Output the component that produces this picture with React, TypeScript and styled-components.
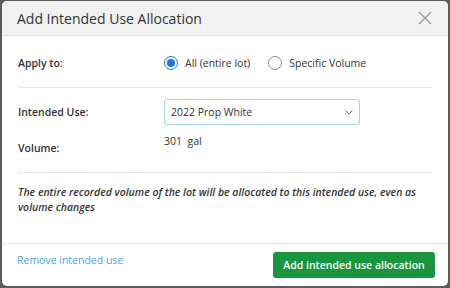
import React, { useState } from "react";
import styled, { createGlobalStyle } from "styled-components";

const GlobalStyle = createGlobalStyle`
  html, body {
    margin: 0;
    padding: 0;
    background: #5a5a5a;
    font-family: "Open Sans", "Liberation Sans", sans-serif;
  }
  * { box-sizing: border-box; }
`;

const Page = styled.div`
  width: 450px;
  height: 288px;
  padding: 1px 2px 2px 2px;
`;

const Modal = styled.div`
  width: 446px;
  height: 285px;
  background: #fff;
  border-radius: 5px;
  overflow: hidden;
  display: flex;
  flex-direction: column;
`;

const Header = styled.header`
  height: 35px;
  flex-shrink: 0;
  background: #f1f1f1;
  border-bottom: 1px solid #e2e2e2;
  display: flex;
  align-items: center;
  justify-content: space-between;
  padding: 0 16px 0 15px;
  h2 {
    margin: 0;
    font-size: 14px;
    font-weight: 500;
    color: #333;
  }
`;

const Close = styled.button`
  border: 0;
  background: none;
  padding: 0;
  width: 14px;
  height: 14px;
  display: flex;
  cursor: pointer;
`;

const Body = styled.div`
  flex: 1;
  padding: 0 16px;
  display: flex;
  flex-direction: column;
`;

const Section = styled.section<{ $pad: string }>`
  padding: ${(p) => p.$pad};
  border-bottom: 1px solid #e6e6e6;
  display: flex;
  flex-direction: column;
`;

const Row = styled.div<{ $h: number; $gap?: number }>`
  display: grid;
  grid-template-columns: 146px 1fr;
  align-items: center;
  min-height: ${(p) => p.$h}px;
  margin-top: ${(p) => p.$gap || 0}px;
`;

const Label = styled.span<{ $top?: number }>`
  font-size: 10.5px;
  font-weight: 600;
  color: #333;
  padding-top: ${(p) => p.$top || 0}px;
  align-self: ${(p) => (p.$top ? "start" : "center")};
`;

const RadioGroup = styled.div`
  display: flex;
  align-items: center;
  gap: 18px;
`;

const RadioOption = styled.label`
  display: flex;
  align-items: center;
  gap: 7px;
  font-size: 10.5px;
  color: #333;
  cursor: pointer;
`;

const RadioDot = styled.span<{ $on: boolean }>`
  width: 14px;
  height: 14px;
  border-radius: 50%;
  border: 1px solid ${(p) => (p.$on ? "#1a73e8" : "#8a8a8a")};
  background: #fff;
  display: flex;
  align-items: center;
  justify-content: center;
  &::after {
    content: "";
    width: 8px;
    height: 8px;
    border-radius: 50%;
    background: ${(p) => (p.$on ? "#1a73e8" : "transparent")};
  }
`;

const Select = styled.div`
  width: 196px;
  height: 26px;
  border: 1px solid #9fcff5;
  border-radius: 3px;
  display: flex;
  align-items: center;
  justify-content: space-between;
  padding: 0 6px;
  font-size: 10.5px;
  color: #333;
`;

const Value = styled.span`
  font-size: 10.5px;
  color: #333;
  align-self: start;
`;

const Note = styled.p`
  margin: 0;
  padding: 12px 0 0 0;
  font-size: 10.5px;
  font-style: italic;
  font-weight: 600;
  line-height: 15px;
  color: #333;
`;

const Footer = styled.footer`
  height: 43px;
  flex-shrink: 0;
  border-top: 1px solid #e6e6e6;
  display: flex;
  align-items: center;
  justify-content: space-between;
  padding: 0 13px 0 15px;
`;

const Link = styled.a`
  font-size: 10.5px;
  color: #4aa3e6;
  text-decoration: none;
  margin-top: -10px;
`;

const Primary = styled.button`
  height: 26px;
  width: 162px;
  background: #17953f;
  color: #fff;
  border: 0;
  border-radius: 3px;
  font-family: inherit;
  font-size: 10.5px;
  font-weight: 600;
  white-space: nowrap;
`;

export default function App() {
  const [all, setAll] = useState(true);
  return (
    <Page>
      <GlobalStyle />
      <Modal>
        <Header>
          <h2>Add Intended Use Allocation</h2>
          <Close aria-label="Close">
            <svg width="14" height="14" viewBox="0 0 14 14">
              <path d="M1 1L13 13M13 1L1 13" stroke="#9a9a9a" strokeWidth="1.4" />
            </svg>
          </Close>
        </Header>
        <Body>
          <Section $pad="14px 0 11px 0">
            <Row $h={26}>
              <Label>Apply to:</Label>
              <RadioGroup>
                <RadioOption onClick={() => setAll(true)}>
                  <RadioDot $on={all} />
                  All (entire lot)
                </RadioOption>
                <RadioOption onClick={() => setAll(false)}>
                  <RadioDot $on={!all} />
                  Specific Volume
                </RadioOption>
              </RadioGroup>
            </Row>
          </Section>
          <Section $pad="11px 0 12px 0">
            <Row $h={26}>
              <Label>Intended Use:</Label>
              <Select>
                2022 Prop White
                <svg width="8" height="5" viewBox="0 0 8 5">
                  <path d="M0.5 0.5L4 4L7.5 0.5" stroke="#777" fill="none" strokeWidth="1" />
                </svg>
              </Select>
            </Row>
            <Row $h={26} $gap={9}>
              <Label $top={7}>Volume:</Label>
              <Value>301&nbsp; gal</Value>
            </Row>
          </Section>
          <Note>
            The entire recorded volume of the lot will be allocated to this intended use, even as volume changes
          </Note>
        </Body>
        <Footer>
          <Link href="#">Remove intended use</Link>
          <Primary>Add intended use allocation</Primary>
        </Footer>
      </Modal>
    </Page>
  );
}
